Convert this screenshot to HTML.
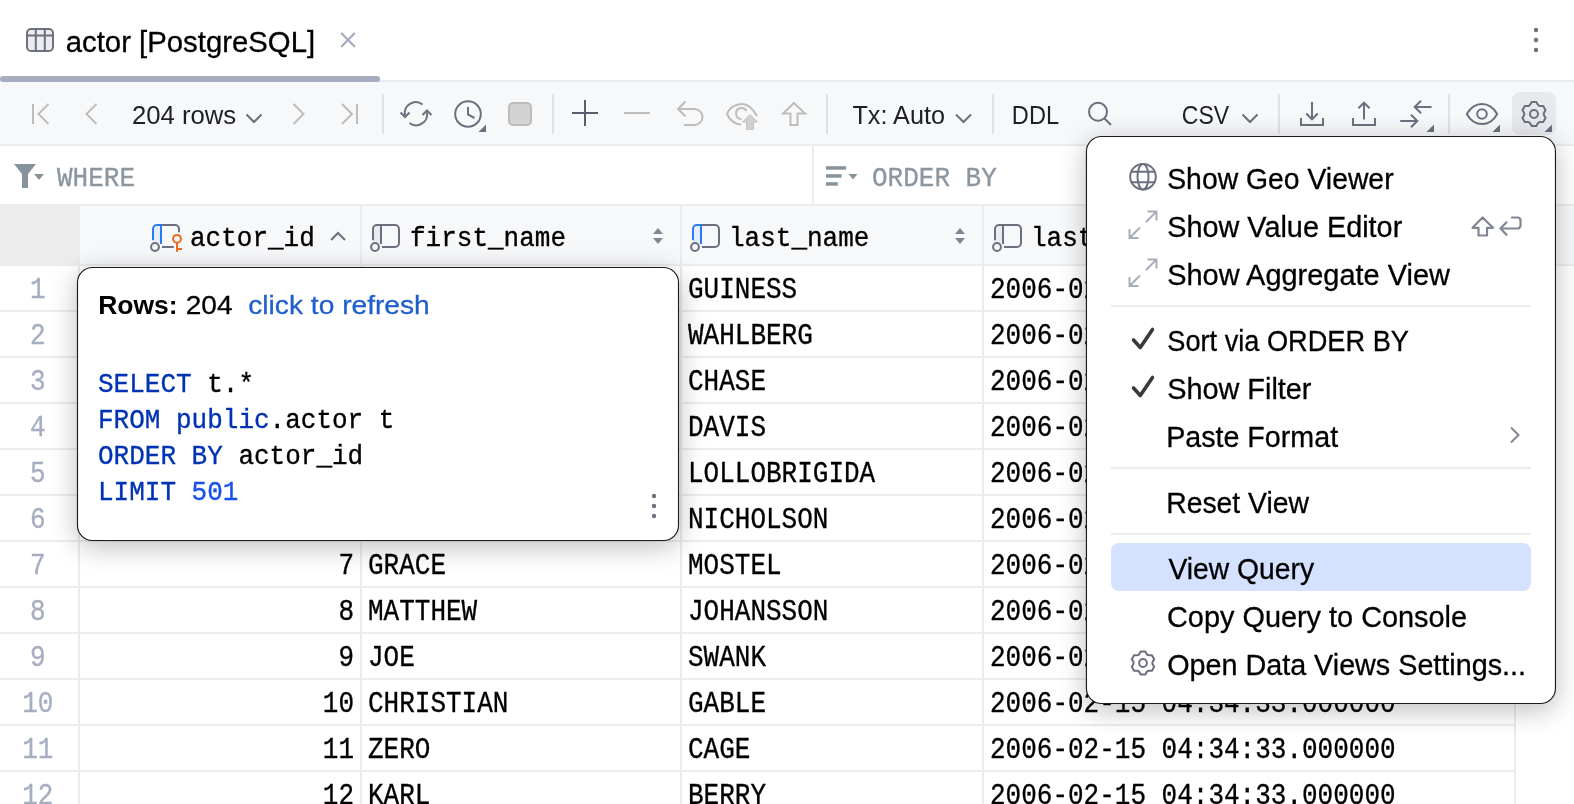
<!DOCTYPE html>
<html><head><meta charset="utf-8"><style>
html,body{margin:0;padding:0;width:1574px;height:804px;overflow:hidden;background:#fff;font-family:"Liberation Sans",sans-serif}
</style></head><body>
<svg width="1574" height="804" viewBox="0 0 1574 804" style="position:absolute;left:0;top:0;will-change:transform"><defs>
<filter id="sh" x="-20%" y="-20%" width="140%" height="150%">
<feGaussianBlur in="SourceAlpha" stdDeviation="14"/>
<feOffset dx="0" dy="6" result="b"/>
<feComponentTransfer><feFuncA type="linear" slope="0.26"/></feComponentTransfer>
<feMerge><feMergeNode/><feMergeNode in="SourceGraphic"/></feMerge>
</filter>
</defs><rect x="0" y="0" width="1574" height="804" fill="#ffffff" rx="0" /><rect x="27" y="29" width="26" height="22" fill="#ebecf0" rx="4" /><path d="M31 29 H49 A4 4 0 0 1 53 33 V47 A4 4 0 0 1 49 51 H31 A4 4 0 0 1 27 47 V33 A4 4 0 0 1 31 29 Z M27 35.5 H53 M35.8 29 V51 M44.8 29 V51" stroke="#6c707e" stroke-width="2" fill="none" /><text x="65.75" y="51.8" font-size="28.9" fill="#000" font-family='"Liberation Sans",sans-serif' font-weight="normal" textLength="249.34" lengthAdjust="spacingAndGlyphs" stroke="#000" stroke-width="0.3" >actor [PostgreSQL]</text><path d="M341.8 33.6 L354.3 46.3 M354.3 33.6 L341.8 46.3" stroke="#a3abbe" stroke-width="2.1" fill="none" stroke-linecap="round"/><circle cx="1536" cy="30" r="2.2" fill="#6c707e"/><circle cx="1536" cy="40" r="2.2" fill="#6c707e"/><circle cx="1536" cy="50" r="2.2" fill="#6c707e"/><rect x="0" y="80" width="1574" height="2" fill="#ebecf0" rx="0" /><rect x="0" y="82" width="1574" height="62" fill="#f7f8fa" rx="0" /><rect x="0" y="144" width="1574" height="2" fill="#ebecf0" rx="0" /><rect x="0" y="76" width="380" height="6" fill="#a6adc0" rx="3" /><path d="M33 104 V124 M48.5 104 L38.5 114 L48.5 124" stroke="#bdbdbd" stroke-width="2" fill="none" /><path d="M96.5 104 L86.5 114 L96.5 124" stroke="#bdbdbd" stroke-width="2" fill="none" /><text x="131.91" y="124" font-size="25" fill="#1e1f22" font-family='"Liberation Sans",sans-serif' font-weight="normal" textLength="104.32" lengthAdjust="spacingAndGlyphs" stroke="#1e1f22" stroke-width="0" >204 rows</text><path d="M246.5 114.5 L254 122 L261.5 114.5" stroke="#6c707e" stroke-width="2" fill="none" /><path d="M293.5 104 L303.5 114 L293.5 124" stroke="#bdbdbd" stroke-width="2" fill="none" /><path d="M342 104 L352 114 L342 124 M357 104 V124" stroke="#bdbdbd" stroke-width="2" fill="none" /><rect x="382" y="94" width="2" height="40" fill="#dfe1e5" rx="0" /><path d="M422.5 104.5 A11 11 0 0 0 405 115.5 M409.5 123 A11 11 0 0 0 427 112.5 M400.5 112.5 L405 117 L409.5 112.5 M422.5 115 L427 110.5 L431.5 115" stroke="#6c707e" stroke-width="2" fill="none" /><circle cx="468" cy="114" r="12.8" stroke="#6c707e" stroke-width="2" fill="none"/><path d="M468 107 V114.5 L474.5 118" stroke="#6c707e" stroke-width="2" fill="none" /><path d="M486 124.5 V132 H478.5 Z" stroke="none" stroke-width="0" fill="#6c707e" /><rect x="509" y="103" width="22" height="22" fill="#d3d3d3" rx="4" stroke="#bcbcbc" stroke-width="2"/><rect x="552" y="94" width="2" height="40" fill="#dfe1e5" rx="0" /><path d="M585 100 V126 M572 113 H598" stroke="#5a5f6e" stroke-width="2" fill="none" /><path d="M624 113 H650" stroke="#bdbdbd" stroke-width="2" fill="none" /><path d="M685.5 101.5 L678 109 L685.5 116.5 M678 109 H694.5 A8 8 0 0 1 694.5 125 H684" stroke="#bdbdbd" stroke-width="2" fill="none" /><path d="M757 116 C752 107 746 104 742 104 C735 104 729 108 727 114 C730 121 736 124.5 741 124.5" stroke="#bdbdbd" stroke-width="2" fill="none" /><path d="M746.5 111 A5.5 5.5 0 1 0 741.5 119" stroke="#bdbdbd" stroke-width="2" fill="none" /><path d="M750 114.5 L757.5 122 H753.5 V129.5 H746.5 V122 H742.5 Z" stroke="#c4c4c4" stroke-width="1" fill="#d0d0d0" /><path d="M794 103 L805 113.5 H797.5 V125 H790.5 V113.5 H783 Z" stroke="#bdbdbd" stroke-width="2" fill="none" stroke-linejoin="miter"/><rect x="826" y="94" width="2" height="40" fill="#dfe1e5" rx="0" /><text x="852.44" y="124" font-size="25" fill="#1e1f22" font-family='"Liberation Sans",sans-serif' font-weight="normal" textLength="92.50" lengthAdjust="spacingAndGlyphs" stroke="#1e1f22" stroke-width="0" >Tx: Auto</text><path d="M956 114.5 L963.5 122 L971 114.5" stroke="#6c707e" stroke-width="2" fill="none" /><rect x="992" y="94" width="2" height="40" fill="#dfe1e5" rx="0" /><text x="1011.86" y="123.8" font-size="25" fill="#1e1f22" font-family='"Liberation Sans",sans-serif' font-weight="normal" textLength="47.22" lengthAdjust="spacingAndGlyphs" stroke="#1e1f22" stroke-width="0" >DDL</text><circle cx="1098" cy="111.8" r="9" stroke="#6c707e" stroke-width="2" fill="none"/><path d="M1104.5 118.5 L1111 125" stroke="#6c707e" stroke-width="2" fill="none" /><text x="1181.83" y="123.8" font-size="25" fill="#1e1f22" font-family='"Liberation Sans",sans-serif' font-weight="normal" textLength="47.27" lengthAdjust="spacingAndGlyphs" stroke="#1e1f22" stroke-width="0" >CSV</text><path d="M1242.5 114.5 L1250 122 L1257.5 114.5" stroke="#6c707e" stroke-width="2" fill="none" /><rect x="1278" y="94" width="2" height="40" fill="#dfe1e5" rx="0" /><path d="M1312 102 V119 M1306.2 113.5 L1312 119.3 L1317.8 113.5 M1301 118 V125 H1323 V118" stroke="#6c707e" stroke-width="2" fill="none" /><path d="M1364 119.5 V103 M1358.4 108.3 L1364 102.7 L1369.6 108.3" stroke="#6c707e" stroke-width="2" fill="none" /><path d="M1353 118 V125 H1375 V118" stroke="#6c707e" stroke-width="2" fill="none" /><path d="M1431.5 107 H1415.5 M1421 100.7 L1414.7 107 L1421 113.3 M1400.2 121 H1416.5 M1411 114.7 L1417.3 121 L1411 127.3" stroke="#6c707e" stroke-width="2" fill="none" /><path d="M1434 124.5 V132 H1426.5 Z" stroke="none" stroke-width="0" fill="#6c707e" /><rect x="1448" y="94" width="2" height="40" fill="#dfe1e5" rx="0" /><path d="M1466.8 114 C1470.3 107.6 1475.5 103.9 1482 103.9 C1488.5 103.9 1493.7 107.6 1497.2 114 C1493.7 120.4 1488.5 124.1 1482 124.1 C1475.5 124.1 1470.3 120.4 1466.8 114 Z" stroke="#6c707e" stroke-width="2" fill="none" stroke-linejoin="round"/><circle cx="1482" cy="114" r="4.8" stroke="#6c707e" stroke-width="2" fill="none"/><path d="M1500 124.5 V132 H1492.5 Z" stroke="none" stroke-width="0" fill="#6c707e" /><rect x="1512" y="92" width="44" height="43" fill="#e8e9ed" rx="8" /><path d="M1531.67 102.02 L1536.33 102.02 L1537.69 104.38 L1538.80 105.69 L1540.48 106.00 L1543.21 106.00 L1545.54 110.03 L1544.17 112.39 L1543.60 114.00 L1544.17 115.61 L1545.54 117.97 L1543.21 122.00 L1540.48 122.00 L1538.80 122.31 L1537.69 123.62 L1536.33 125.98 L1531.67 125.98 L1530.31 123.62 L1529.20 122.31 L1527.52 122.00 L1524.79 122.00 L1522.46 117.97 L1523.83 115.61 L1524.40 114.00 L1523.83 112.39 L1522.46 110.03 L1524.79 106.00 L1527.52 106.00 L1529.20 105.69 L1530.31 104.38 Z" stroke="#6c707e" stroke-width="2" fill="none" stroke-linejoin="round"/><circle cx="1534" cy="114" r="4" stroke="#6c707e" stroke-width="2" fill="none"/><path d="M1552 124.5 V132 H1544.5 Z" stroke="none" stroke-width="0" fill="#6c707e" /><path d="M14 164 H36 L28 174 V188 H22 V174 Z" stroke="none" stroke-width="0" fill="#87939a" /><path d="M34 174 H44 L39 180 Z" stroke="none" stroke-width="0" fill="#87939a" /><text x="57.00" y="186" font-size="28.2" fill="#8c96a0" font-family='"Liberation Mono",monospace' textLength="78.00" lengthAdjust="spacingAndGlyphs" stroke="#8c96a0" stroke-width="0.35" >WHERE</text><rect x="812" y="146" width="2" height="58" fill="#ebecf0" rx="0" /><rect x="826" y="166.2" width="20" height="3.5" fill="#87939a" rx="0" /><rect x="826" y="174.2" width="15.6" height="3.5" fill="#87939a" rx="0" /><rect x="826" y="182.2" width="11.8" height="3.5" fill="#87939a" rx="0" /><path d="M848.5 174 H857.5 L853 179.6 Z" stroke="none" stroke-width="0" fill="#87939a" /><text x="872.00" y="186" font-size="28.2" fill="#8c96a0" font-family='"Liberation Mono",monospace' textLength="124.80" lengthAdjust="spacingAndGlyphs" stroke="#8c96a0" stroke-width="0.35" >ORDER BY</text><rect x="0" y="204" width="1574" height="2" fill="#ebecf0" rx="0" /><rect x="0" y="206" width="1574" height="58" fill="#f7f8fa" rx="0" /><rect x="0" y="206" width="78" height="58" fill="#ededed" rx="0" /><rect x="0" y="264" width="1574" height="2" fill="#ebecf0" rx="0" /><rect x="78" y="206" width="2" height="598" fill="#ebecf0" rx="0" /><rect x="360" y="206" width="2" height="598" fill="#ebecf0" rx="0" /><rect x="680" y="206" width="2" height="598" fill="#ebecf0" rx="0" /><rect x="982" y="206" width="2" height="598" fill="#ebecf0" rx="0" /><rect x="1514" y="206" width="2" height="598" fill="#ebecf0" rx="0" /><rect x="154" y="226" width="7" height="17" fill="#e6eefe" rx="0" /><path d="M161 225 H175 A4 4 0 0 1 179 229 V232.2" stroke="#6c707e" stroke-width="2" fill="none" /><path d="M162 247 H173.8" stroke="#6c707e" stroke-width="2" fill="none" /><path d="M153 240.3 V229 A4 4 0 0 1 157 225 H161 V244" stroke="#2a7af3" stroke-width="2" fill="none" /><circle cx="155" cy="247" r="3.9" stroke="#6c707e" stroke-width="2" fill="none"/><circle cx="177" cy="238.8" r="3.9" stroke="#ee6a1a" stroke-width="2" fill="none"/><path d="M177 242.7 V251.8 M177 249 H182" stroke="#ee6a1a" stroke-width="2" fill="none" /><text x="190.00" y="245.5" font-size="28.2" fill="#000" font-family='"Liberation Mono",monospace' textLength="124.80" lengthAdjust="spacingAndGlyphs" stroke="#000" stroke-width="0.35" >actor_id</text><path d="M331 240 L338 233 L345 240" stroke="#6c707e" stroke-width="2" fill="none" /><rect x="374" y="226" width="7" height="17" fill="#ebecf0" rx="0" /><path d="M381 225 H395 A4 4 0 0 1 399 229 V243 A4 4 0 0 1 395 247 H382" stroke="#6c707e" stroke-width="2" fill="none" /><path d="M373 240.3 V229 A4 4 0 0 1 377 225 H381 V244" stroke="#6c707e" stroke-width="2" fill="none" /><circle cx="375" cy="247" r="3.9" stroke="#6c707e" stroke-width="2" fill="none"/><text x="410.00" y="245.5" font-size="28.2" fill="#000" font-family='"Liberation Mono",monospace' textLength="156.00" lengthAdjust="spacingAndGlyphs" stroke="#000" stroke-width="0.35" >first_name</text><path d="M653 234 L658 228 L663 234 Z" stroke="none" stroke-width="0" fill="#818594" /><path d="M653 238 L658 244 L663 238 Z" stroke="none" stroke-width="0" fill="#818594" /><rect x="694" y="226" width="7" height="17" fill="#e6eefe" rx="0" /><path d="M701 225 H715 A4 4 0 0 1 719 229 V243 A4 4 0 0 1 715 247 H702" stroke="#6c707e" stroke-width="2" fill="none" /><path d="M693 240.3 V229 A4 4 0 0 1 697 225 H701 V244" stroke="#2a7af3" stroke-width="2" fill="none" /><circle cx="695" cy="247" r="3.9" stroke="#6c707e" stroke-width="2" fill="none"/><text x="729.00" y="245.5" font-size="28.2" fill="#000" font-family='"Liberation Mono",monospace' textLength="140.40" lengthAdjust="spacingAndGlyphs" stroke="#000" stroke-width="0.35" >last_name</text><path d="M955 234 L960 228 L965 234 Z" stroke="none" stroke-width="0" fill="#818594" /><path d="M955 238 L960 244 L965 238 Z" stroke="none" stroke-width="0" fill="#818594" /><rect x="996" y="226" width="7" height="17" fill="#ebecf0" rx="0" /><path d="M1003 225 H1017 A4 4 0 0 1 1021 229 V243 A4 4 0 0 1 1017 247 H1004" stroke="#6c707e" stroke-width="2" fill="none" /><path d="M995 240.3 V229 A4 4 0 0 1 999 225 H1003 V244" stroke="#6c707e" stroke-width="2" fill="none" /><circle cx="997" cy="247" r="3.9" stroke="#6c707e" stroke-width="2" fill="none"/><text x="1031.00" y="245.5" font-size="28.2" fill="#000" font-family='"Liberation Mono",monospace' textLength="171.60" lengthAdjust="spacingAndGlyphs" stroke="#000" stroke-width="0.35" >last_update</text><rect x="0" y="310" width="1514" height="2" fill="#ebecf0" rx="0" /><text x="30.00" y="298" font-size="29.5" fill="#a6aec1" font-family='"Liberation Mono",monospace' textLength="15.60" lengthAdjust="spacingAndGlyphs" stroke="#a6aec1" stroke-width="0.35" >1</text><text x="338.40" y="298" font-size="29.6" fill="#000" font-family='"Liberation Mono",monospace' textLength="15.60" lengthAdjust="spacingAndGlyphs" stroke="#000" stroke-width="0.35" >1</text><text x="368.00" y="298" font-size="29.6" fill="#000" font-family='"Liberation Mono",monospace' textLength="124.80" lengthAdjust="spacingAndGlyphs" stroke="#000" stroke-width="0.35" >PENELOPE</text><text x="688.00" y="298" font-size="29.6" fill="#000" font-family='"Liberation Mono",monospace' textLength="109.20" lengthAdjust="spacingAndGlyphs" stroke="#000" stroke-width="0.35" >GUINESS</text><text x="990.00" y="298" font-size="29.6" fill="#000" font-family='"Liberation Mono",monospace' textLength="405.60" lengthAdjust="spacingAndGlyphs" stroke="#000" stroke-width="0.35" >2006-02-15 04:34:33.000000</text><rect x="0" y="356" width="1514" height="2" fill="#ebecf0" rx="0" /><text x="30.00" y="344" font-size="29.5" fill="#a6aec1" font-family='"Liberation Mono",monospace' textLength="15.60" lengthAdjust="spacingAndGlyphs" stroke="#a6aec1" stroke-width="0.35" >2</text><text x="338.40" y="344" font-size="29.6" fill="#000" font-family='"Liberation Mono",monospace' textLength="15.60" lengthAdjust="spacingAndGlyphs" stroke="#000" stroke-width="0.35" >2</text><text x="368.00" y="344" font-size="29.6" fill="#000" font-family='"Liberation Mono",monospace' textLength="62.40" lengthAdjust="spacingAndGlyphs" stroke="#000" stroke-width="0.35" >NICK</text><text x="688.00" y="344" font-size="29.6" fill="#000" font-family='"Liberation Mono",monospace' textLength="124.80" lengthAdjust="spacingAndGlyphs" stroke="#000" stroke-width="0.35" >WAHLBERG</text><text x="990.00" y="344" font-size="29.6" fill="#000" font-family='"Liberation Mono",monospace' textLength="405.60" lengthAdjust="spacingAndGlyphs" stroke="#000" stroke-width="0.35" >2006-02-15 04:34:33.000000</text><rect x="0" y="402" width="1514" height="2" fill="#ebecf0" rx="0" /><text x="30.00" y="390" font-size="29.5" fill="#a6aec1" font-family='"Liberation Mono",monospace' textLength="15.60" lengthAdjust="spacingAndGlyphs" stroke="#a6aec1" stroke-width="0.35" >3</text><text x="338.40" y="390" font-size="29.6" fill="#000" font-family='"Liberation Mono",monospace' textLength="15.60" lengthAdjust="spacingAndGlyphs" stroke="#000" stroke-width="0.35" >3</text><text x="368.00" y="390" font-size="29.6" fill="#000" font-family='"Liberation Mono",monospace' textLength="31.20" lengthAdjust="spacingAndGlyphs" stroke="#000" stroke-width="0.35" >ED</text><text x="688.00" y="390" font-size="29.6" fill="#000" font-family='"Liberation Mono",monospace' textLength="78.00" lengthAdjust="spacingAndGlyphs" stroke="#000" stroke-width="0.35" >CHASE</text><text x="990.00" y="390" font-size="29.6" fill="#000" font-family='"Liberation Mono",monospace' textLength="405.60" lengthAdjust="spacingAndGlyphs" stroke="#000" stroke-width="0.35" >2006-02-15 04:34:33.000000</text><rect x="0" y="448" width="1514" height="2" fill="#ebecf0" rx="0" /><text x="30.00" y="436" font-size="29.5" fill="#a6aec1" font-family='"Liberation Mono",monospace' textLength="15.60" lengthAdjust="spacingAndGlyphs" stroke="#a6aec1" stroke-width="0.35" >4</text><text x="338.40" y="436" font-size="29.6" fill="#000" font-family='"Liberation Mono",monospace' textLength="15.60" lengthAdjust="spacingAndGlyphs" stroke="#000" stroke-width="0.35" >4</text><text x="368.00" y="436" font-size="29.6" fill="#000" font-family='"Liberation Mono",monospace' textLength="124.80" lengthAdjust="spacingAndGlyphs" stroke="#000" stroke-width="0.35" >JENNIFER</text><text x="688.00" y="436" font-size="29.6" fill="#000" font-family='"Liberation Mono",monospace' textLength="78.00" lengthAdjust="spacingAndGlyphs" stroke="#000" stroke-width="0.35" >DAVIS</text><text x="990.00" y="436" font-size="29.6" fill="#000" font-family='"Liberation Mono",monospace' textLength="405.60" lengthAdjust="spacingAndGlyphs" stroke="#000" stroke-width="0.35" >2006-02-15 04:34:33.000000</text><rect x="0" y="494" width="1514" height="2" fill="#ebecf0" rx="0" /><text x="30.00" y="482" font-size="29.5" fill="#a6aec1" font-family='"Liberation Mono",monospace' textLength="15.60" lengthAdjust="spacingAndGlyphs" stroke="#a6aec1" stroke-width="0.35" >5</text><text x="338.40" y="482" font-size="29.6" fill="#000" font-family='"Liberation Mono",monospace' textLength="15.60" lengthAdjust="spacingAndGlyphs" stroke="#000" stroke-width="0.35" >5</text><text x="368.00" y="482" font-size="29.6" fill="#000" font-family='"Liberation Mono",monospace' textLength="93.60" lengthAdjust="spacingAndGlyphs" stroke="#000" stroke-width="0.35" >JOHNNY</text><text x="688.00" y="482" font-size="29.6" fill="#000" font-family='"Liberation Mono",monospace' textLength="187.20" lengthAdjust="spacingAndGlyphs" stroke="#000" stroke-width="0.35" >LOLLOBRIGIDA</text><text x="990.00" y="482" font-size="29.6" fill="#000" font-family='"Liberation Mono",monospace' textLength="405.60" lengthAdjust="spacingAndGlyphs" stroke="#000" stroke-width="0.35" >2006-02-15 04:34:33.000000</text><rect x="0" y="540" width="1514" height="2" fill="#ebecf0" rx="0" /><text x="30.00" y="528" font-size="29.5" fill="#a6aec1" font-family='"Liberation Mono",monospace' textLength="15.60" lengthAdjust="spacingAndGlyphs" stroke="#a6aec1" stroke-width="0.35" >6</text><text x="338.40" y="528" font-size="29.6" fill="#000" font-family='"Liberation Mono",monospace' textLength="15.60" lengthAdjust="spacingAndGlyphs" stroke="#000" stroke-width="0.35" >6</text><text x="368.00" y="528" font-size="29.6" fill="#000" font-family='"Liberation Mono",monospace' textLength="78.00" lengthAdjust="spacingAndGlyphs" stroke="#000" stroke-width="0.35" >BETTE</text><text x="688.00" y="528" font-size="29.6" fill="#000" font-family='"Liberation Mono",monospace' textLength="140.40" lengthAdjust="spacingAndGlyphs" stroke="#000" stroke-width="0.35" >NICHOLSON</text><text x="990.00" y="528" font-size="29.6" fill="#000" font-family='"Liberation Mono",monospace' textLength="405.60" lengthAdjust="spacingAndGlyphs" stroke="#000" stroke-width="0.35" >2006-02-15 04:34:33.000000</text><rect x="0" y="586" width="1514" height="2" fill="#ebecf0" rx="0" /><text x="30.00" y="574" font-size="29.5" fill="#a6aec1" font-family='"Liberation Mono",monospace' textLength="15.60" lengthAdjust="spacingAndGlyphs" stroke="#a6aec1" stroke-width="0.35" >7</text><text x="338.40" y="574" font-size="29.6" fill="#000" font-family='"Liberation Mono",monospace' textLength="15.60" lengthAdjust="spacingAndGlyphs" stroke="#000" stroke-width="0.35" >7</text><text x="368.00" y="574" font-size="29.6" fill="#000" font-family='"Liberation Mono",monospace' textLength="78.00" lengthAdjust="spacingAndGlyphs" stroke="#000" stroke-width="0.35" >GRACE</text><text x="688.00" y="574" font-size="29.6" fill="#000" font-family='"Liberation Mono",monospace' textLength="93.60" lengthAdjust="spacingAndGlyphs" stroke="#000" stroke-width="0.35" >MOSTEL</text><text x="990.00" y="574" font-size="29.6" fill="#000" font-family='"Liberation Mono",monospace' textLength="405.60" lengthAdjust="spacingAndGlyphs" stroke="#000" stroke-width="0.35" >2006-02-15 04:34:33.000000</text><rect x="0" y="632" width="1514" height="2" fill="#ebecf0" rx="0" /><text x="30.00" y="620" font-size="29.5" fill="#a6aec1" font-family='"Liberation Mono",monospace' textLength="15.60" lengthAdjust="spacingAndGlyphs" stroke="#a6aec1" stroke-width="0.35" >8</text><text x="338.40" y="620" font-size="29.6" fill="#000" font-family='"Liberation Mono",monospace' textLength="15.60" lengthAdjust="spacingAndGlyphs" stroke="#000" stroke-width="0.35" >8</text><text x="368.00" y="620" font-size="29.6" fill="#000" font-family='"Liberation Mono",monospace' textLength="109.20" lengthAdjust="spacingAndGlyphs" stroke="#000" stroke-width="0.35" >MATTHEW</text><text x="688.00" y="620" font-size="29.6" fill="#000" font-family='"Liberation Mono",monospace' textLength="140.40" lengthAdjust="spacingAndGlyphs" stroke="#000" stroke-width="0.35" >JOHANSSON</text><text x="990.00" y="620" font-size="29.6" fill="#000" font-family='"Liberation Mono",monospace' textLength="405.60" lengthAdjust="spacingAndGlyphs" stroke="#000" stroke-width="0.35" >2006-02-15 04:34:33.000000</text><rect x="0" y="678" width="1514" height="2" fill="#ebecf0" rx="0" /><text x="30.00" y="666" font-size="29.5" fill="#a6aec1" font-family='"Liberation Mono",monospace' textLength="15.60" lengthAdjust="spacingAndGlyphs" stroke="#a6aec1" stroke-width="0.35" >9</text><text x="338.40" y="666" font-size="29.6" fill="#000" font-family='"Liberation Mono",monospace' textLength="15.60" lengthAdjust="spacingAndGlyphs" stroke="#000" stroke-width="0.35" >9</text><text x="368.00" y="666" font-size="29.6" fill="#000" font-family='"Liberation Mono",monospace' textLength="46.80" lengthAdjust="spacingAndGlyphs" stroke="#000" stroke-width="0.35" >JOE</text><text x="688.00" y="666" font-size="29.6" fill="#000" font-family='"Liberation Mono",monospace' textLength="78.00" lengthAdjust="spacingAndGlyphs" stroke="#000" stroke-width="0.35" >SWANK</text><text x="990.00" y="666" font-size="29.6" fill="#000" font-family='"Liberation Mono",monospace' textLength="405.60" lengthAdjust="spacingAndGlyphs" stroke="#000" stroke-width="0.35" >2006-02-15 04:34:33.000000</text><rect x="0" y="724" width="1514" height="2" fill="#ebecf0" rx="0" /><text x="22.20" y="712" font-size="29.5" fill="#a6aec1" font-family='"Liberation Mono",monospace' textLength="31.20" lengthAdjust="spacingAndGlyphs" stroke="#a6aec1" stroke-width="0.35" >10</text><text x="322.80" y="712" font-size="29.6" fill="#000" font-family='"Liberation Mono",monospace' textLength="31.20" lengthAdjust="spacingAndGlyphs" stroke="#000" stroke-width="0.35" >10</text><text x="368.00" y="712" font-size="29.6" fill="#000" font-family='"Liberation Mono",monospace' textLength="140.40" lengthAdjust="spacingAndGlyphs" stroke="#000" stroke-width="0.35" >CHRISTIAN</text><text x="688.00" y="712" font-size="29.6" fill="#000" font-family='"Liberation Mono",monospace' textLength="78.00" lengthAdjust="spacingAndGlyphs" stroke="#000" stroke-width="0.35" >GABLE</text><text x="990.00" y="712" font-size="29.6" fill="#000" font-family='"Liberation Mono",monospace' textLength="405.60" lengthAdjust="spacingAndGlyphs" stroke="#000" stroke-width="0.35" >2006-02-15 04:34:33.000000</text><rect x="0" y="770" width="1514" height="2" fill="#ebecf0" rx="0" /><text x="22.20" y="758" font-size="29.5" fill="#a6aec1" font-family='"Liberation Mono",monospace' textLength="31.20" lengthAdjust="spacingAndGlyphs" stroke="#a6aec1" stroke-width="0.35" >11</text><text x="322.80" y="758" font-size="29.6" fill="#000" font-family='"Liberation Mono",monospace' textLength="31.20" lengthAdjust="spacingAndGlyphs" stroke="#000" stroke-width="0.35" >11</text><text x="368.00" y="758" font-size="29.6" fill="#000" font-family='"Liberation Mono",monospace' textLength="62.40" lengthAdjust="spacingAndGlyphs" stroke="#000" stroke-width="0.35" >ZERO</text><text x="688.00" y="758" font-size="29.6" fill="#000" font-family='"Liberation Mono",monospace' textLength="62.40" lengthAdjust="spacingAndGlyphs" stroke="#000" stroke-width="0.35" >CAGE</text><text x="990.00" y="758" font-size="29.6" fill="#000" font-family='"Liberation Mono",monospace' textLength="405.60" lengthAdjust="spacingAndGlyphs" stroke="#000" stroke-width="0.35" >2006-02-15 04:34:33.000000</text><rect x="0" y="816" width="1514" height="2" fill="#ebecf0" rx="0" /><text x="22.20" y="804" font-size="29.5" fill="#a6aec1" font-family='"Liberation Mono",monospace' textLength="31.20" lengthAdjust="spacingAndGlyphs" stroke="#a6aec1" stroke-width="0.35" >12</text><text x="322.80" y="804" font-size="29.6" fill="#000" font-family='"Liberation Mono",monospace' textLength="31.20" lengthAdjust="spacingAndGlyphs" stroke="#000" stroke-width="0.35" >12</text><text x="368.00" y="804" font-size="29.6" fill="#000" font-family='"Liberation Mono",monospace' textLength="62.40" lengthAdjust="spacingAndGlyphs" stroke="#000" stroke-width="0.35" >KARL</text><text x="688.00" y="804" font-size="29.6" fill="#000" font-family='"Liberation Mono",monospace' textLength="78.00" lengthAdjust="spacingAndGlyphs" stroke="#000" stroke-width="0.35" >BERRY</text><text x="990.00" y="804" font-size="29.6" fill="#000" font-family='"Liberation Mono",monospace' textLength="405.60" lengthAdjust="spacingAndGlyphs" stroke="#000" stroke-width="0.35" >2006-02-15 04:34:33.000000</text><rect x="78" y="266" width="2" height="538" fill="#ebecf0" rx="0" /><rect x="360" y="266" width="2" height="538" fill="#ebecf0" rx="0" /><rect x="680" y="266" width="2" height="538" fill="#ebecf0" rx="0" /><rect x="982" y="266" width="2" height="538" fill="#ebecf0" rx="0" /><rect x="1514" y="266" width="2" height="538" fill="#ebecf0" rx="0" /><g filter="url(#sh)"><rect x="77.5" y="267.5" width="601" height="273" fill="#ffffff" rx="15" stroke="#1e1e1e" stroke-width="1.15"/></g><text x="98.13" y="314" font-size="26.5" fill="#000" font-family='"Liberation Sans",sans-serif' font-weight="bold" textLength="79.42" lengthAdjust="spacingAndGlyphs" stroke="#000" stroke-width="0" >Rows:</text><text x="185.79" y="314" font-size="26.5" fill="#000" font-family='"Liberation Sans",sans-serif' font-weight="normal" textLength="46.73" lengthAdjust="spacingAndGlyphs" stroke="#000" stroke-width="0.3" >204</text><text x="248.30" y="314" font-size="26.5" fill="#1f5fcc" font-family='"Liberation Sans",sans-serif' font-weight="normal" textLength="181.42" lengthAdjust="spacingAndGlyphs" stroke="#1f5fcc" stroke-width="0.3" >click to refresh</text><text x="98.00" y="392" font-size="28.2" fill="#0033b3" font-family='"Liberation Mono",monospace' textLength="93.60" lengthAdjust="spacingAndGlyphs" stroke="#0033b3" stroke-width="0.35" >SELECT</text><text x="207.20" y="392" font-size="28.2" fill="#000" font-family='"Liberation Mono",monospace' textLength="46.80" lengthAdjust="spacingAndGlyphs" stroke="#000" stroke-width="0.35" >t.*</text><text x="98.00" y="428" font-size="28.2" fill="#0033b3" font-family='"Liberation Mono",monospace' textLength="62.40" lengthAdjust="spacingAndGlyphs" stroke="#0033b3" stroke-width="0.35" >FROM</text><text x="176.00" y="428" font-size="28.2" fill="#0033b3" font-family='"Liberation Mono",monospace' textLength="93.60" lengthAdjust="spacingAndGlyphs" stroke="#0033b3" stroke-width="0.35" >public</text><text x="269.60" y="428" font-size="28.2" fill="#000" font-family='"Liberation Mono",monospace' textLength="124.80" lengthAdjust="spacingAndGlyphs" stroke="#000" stroke-width="0.35" >.actor t</text><text x="98.00" y="464" font-size="28.2" fill="#0033b3" font-family='"Liberation Mono",monospace' textLength="124.80" lengthAdjust="spacingAndGlyphs" stroke="#0033b3" stroke-width="0.35" >ORDER BY</text><text x="238.40" y="464" font-size="28.2" fill="#000" font-family='"Liberation Mono",monospace' textLength="124.80" lengthAdjust="spacingAndGlyphs" stroke="#000" stroke-width="0.35" >actor_id</text><text x="98.00" y="500" font-size="28.2" fill="#0033b3" font-family='"Liberation Mono",monospace' textLength="78.00" lengthAdjust="spacingAndGlyphs" stroke="#0033b3" stroke-width="0.35" >LIMIT</text><text x="191.60" y="500" font-size="28.2" fill="#1750eb" font-family='"Liberation Mono",monospace' textLength="46.80" lengthAdjust="spacingAndGlyphs" stroke="#1750eb" stroke-width="0.35" >501</text><circle cx="654" cy="496" r="2.2" fill="#6c707e"/><circle cx="654" cy="506" r="2.2" fill="#6c707e"/><circle cx="654" cy="516" r="2.2" fill="#6c707e"/><g filter="url(#sh)"><rect x="1086.45" y="136.45" width="469" height="567" fill="#ffffff" rx="15" stroke="#1e1e1e" stroke-width="1.15"/></g><circle cx="1143" cy="176.7" r="12.8" stroke="#6c707e" stroke-width="2" fill="none"/><ellipse cx="1143" cy="176.7" rx="5.5" ry="12.8" stroke="#6c707e" stroke-width="2" fill="none"/><path d="M1131 171.7 H1155 M1131 182.2 H1155" stroke="#6c707e" stroke-width="2" fill="none" /><text x="1167.22" y="188.7" font-size="28.9" fill="#000" font-family='"Liberation Sans",sans-serif' font-weight="normal" textLength="226.35" lengthAdjust="spacingAndGlyphs" stroke="#000" stroke-width="0.3" >Show Geo Viewer</text><path d="M1147.5 211.5 H1156.5 V220.5 M1156.5 211.5 L1146 222 M1138.5 238 H1129.5 V229 M1129.5 238 L1140 227.5" stroke="#a8adbd" stroke-width="2" fill="none" /><text x="1167.20" y="236.7" font-size="28.9" fill="#000" font-family='"Liberation Sans",sans-serif' font-weight="normal" textLength="235.07" lengthAdjust="spacingAndGlyphs" stroke="#000" stroke-width="0.3" >Show Value Editor</text><path d="M1482.6 217.5 L1472.5 227.8 H1478.5 V235.5 H1487 V227.8 H1493 Z" stroke="#818594" stroke-width="2.2" fill="none" stroke-linejoin="round"/><path d="M1512 217.5 H1517.5 A3 3 0 0 1 1520.5 220.5 V225.5 A3 3 0 0 1 1517.5 228.5 H1500.5 M1506.5 222.3 L1500.5 228.5 L1506.5 234.8" stroke="#818594" stroke-width="2.2" fill="none" stroke-linecap="round" stroke-linejoin="round"/><path d="M1147.5 259.5 H1156.5 V268.5 M1156.5 259.5 L1146 270 M1138.5 286 H1129.5 V277 M1129.5 286 L1140 275.5" stroke="#a8adbd" stroke-width="2" fill="none" /><text x="1167.19" y="284.7" font-size="28.9" fill="#000" font-family='"Liberation Sans",sans-serif' font-weight="normal" textLength="282.84" lengthAdjust="spacingAndGlyphs" stroke="#000" stroke-width="0.3" >Show Aggregate View</text><rect x="1111" y="305" width="420" height="2" fill="#ebecf0" rx="0" /><path d="M1133.5 340 L1140.3 347.5 L1152.5 329.5" stroke="#3a3a3a" stroke-width="3.6" fill="none" stroke-linecap="round" stroke-linejoin="round"/><text x="1167.27" y="350.7" font-size="28.9" fill="#000" font-family='"Liberation Sans",sans-serif' font-weight="normal" textLength="241.63" lengthAdjust="spacingAndGlyphs" stroke="#000" stroke-width="0.3" >Sort via ORDER BY</text><path d="M1133.5 388 L1140.3 395.5 L1152.5 377.5" stroke="#3a3a3a" stroke-width="3.6" fill="none" stroke-linecap="round" stroke-linejoin="round"/><text x="1167.19" y="398.7" font-size="28.9" fill="#000" font-family='"Liberation Sans",sans-serif' font-weight="normal" textLength="144.29" lengthAdjust="spacingAndGlyphs" stroke="#000" stroke-width="0.3" >Show Filter</text><text x="1166.15" y="446.7" font-size="28.9" fill="#000" font-family='"Liberation Sans",sans-serif' font-weight="normal" textLength="171.96" lengthAdjust="spacingAndGlyphs" stroke="#000" stroke-width="0.3" >Paste Format</text><path d="M1511 427.5 L1518.5 435 L1511 442.5" stroke="#818594" stroke-width="2" fill="none" /><rect x="1111" y="467" width="420" height="2" fill="#ebecf0" rx="0" /><text x="1166.18" y="512.7" font-size="28.9" fill="#000" font-family='"Liberation Sans",sans-serif' font-weight="normal" textLength="142.85" lengthAdjust="spacingAndGlyphs" stroke="#000" stroke-width="0.3" >Reset View</text><rect x="1111" y="533" width="420" height="2" fill="#ebecf0" rx="0" /><rect x="1111" y="543" width="420" height="48" fill="#d4e2ff" rx="8" /><text x="1168.38" y="578.7" font-size="28.9" fill="#000" font-family='"Liberation Sans",sans-serif' font-weight="normal" textLength="145.68" lengthAdjust="spacingAndGlyphs" stroke="#000" stroke-width="0.3" >View Query</text><text x="1167.03" y="626.7" font-size="28.9" fill="#000" font-family='"Liberation Sans",sans-serif' font-weight="normal" textLength="300.05" lengthAdjust="spacingAndGlyphs" stroke="#000" stroke-width="0.3" >Copy Query to Console</text><path d="M1140.75 651.42 L1145.25 651.42 L1146.55 653.76 L1147.65 654.95 L1149.23 655.31 L1151.91 655.26 L1154.16 659.16 L1152.78 661.45 L1152.30 663.00 L1152.78 664.55 L1154.16 666.84 L1151.91 670.74 L1149.23 670.69 L1147.65 671.05 L1146.55 672.24 L1145.25 674.58 L1140.75 674.58 L1139.45 672.24 L1138.35 671.05 L1136.77 670.69 L1134.09 670.74 L1131.84 666.84 L1133.22 664.55 L1133.70 663.00 L1133.22 661.45 L1131.84 659.16 L1134.09 655.26 L1136.77 655.31 L1138.35 654.95 L1139.45 653.76 Z" stroke="#6c707e" stroke-width="2" fill="none" stroke-linejoin="round"/><circle cx="1143" cy="663" r="3.9" stroke="#6c707e" stroke-width="2" fill="none"/><text x="1167.14" y="674.7" font-size="28.9" fill="#000" font-family='"Liberation Sans",sans-serif' font-weight="normal" textLength="358.88" lengthAdjust="spacingAndGlyphs" stroke="#000" stroke-width="0.3" >Open Data Views Settings...</text></svg>
</body></html>
